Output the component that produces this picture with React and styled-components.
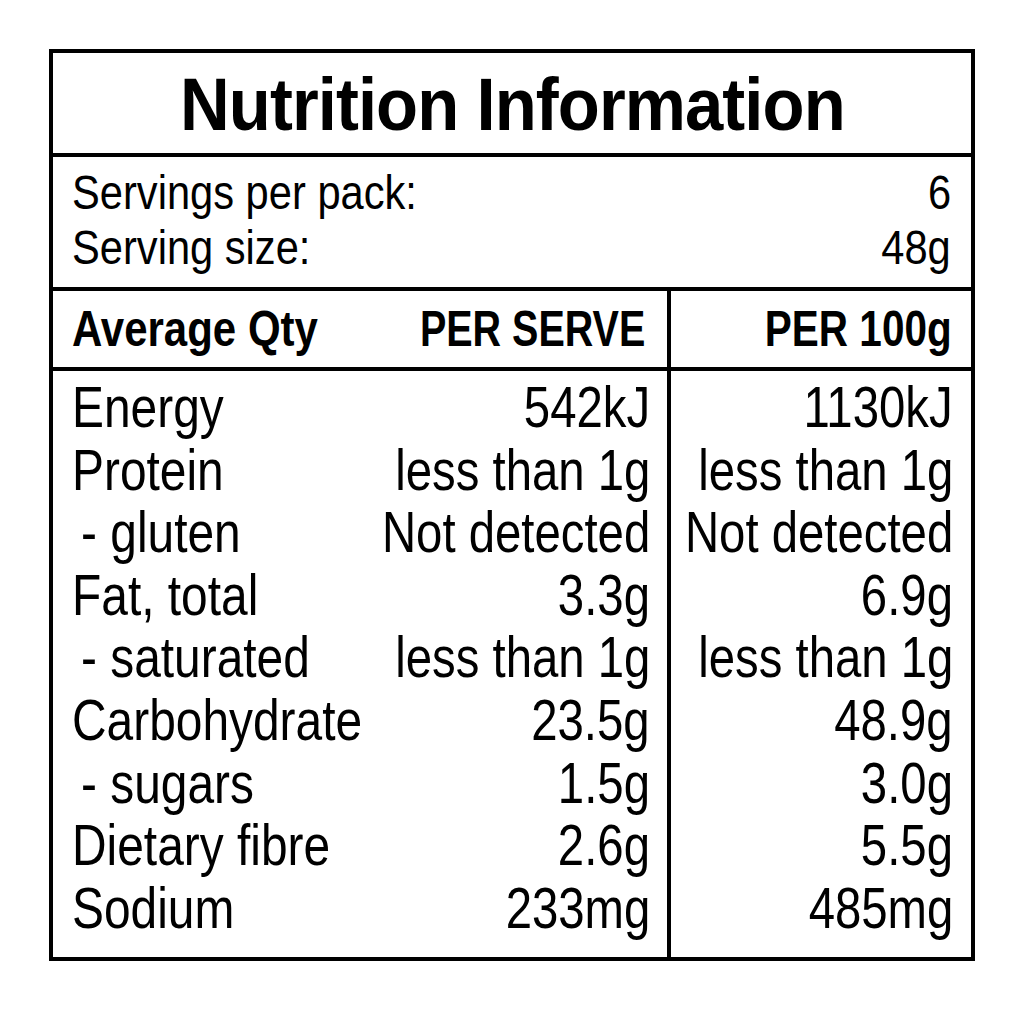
import React from "react";
import styled, { createGlobalStyle } from "styled-components";

const Global = createGlobalStyle`
  html, body { margin: 0; padding: 0; background: #fff; }
  body { font-family: "Liberation Sans", Arial, Helvetica, sans-serif; color: #000; }
`;

const Page = styled.div`
  width: 1024px;
  height: 1024px;
  padding: 49px 0 0 49px;
  box-sizing: border-box;
`;

const Panel = styled.div`
  width: 926px;
  height: 912px;
  box-sizing: border-box;
  border: 4px solid #000;
  display: flex;
  flex-direction: column;
`;

const Narrow = styled.span`
  display: inline-block;
  white-space: nowrap;
  transform: scaleX(${(p) => p.$s || 0.84});
  transform-origin: ${(p) => p.$origin || "left"} center;
`;

const TitleBar = styled.h1`
  margin: 0;
  height: 104px;
  box-sizing: border-box;
  border-bottom: 4px solid #000;
  padding-top: 3px;
  text-align: center;
  font-weight: 700;
  font-size: 74px;
  line-height: 97px;
  letter-spacing: -1px;
  overflow: hidden;
`;

const Servings = styled.div`
  height: 134px;
  box-sizing: border-box;
  border-bottom: 4px solid #000;
  padding: 8px 20px 0 19px;
  font-size: 49px;
  line-height: 55px;
`;

const Line = styled.div`
  display: flex;
  justify-content: space-between;
`;

const Grid = styled.div`
  flex: 1;
  display: grid;
  grid-template-columns: 614px 4px minmax(0, 1fr);
  grid-template-rows: 80px 1fr;
`;

const Divider = styled.div`
  background: #000;
  grid-column: 2;
  grid-row: 1 / 3;
`;

const HeadCell = styled.div`
  border-bottom: 4px solid #000;
  display: flex;
  justify-content: space-between;
  padding: 0 ${(p) => p.$pr}px 0 19px;
  font-weight: 700;
  font-size: 50px;
  line-height: 76px;
  grid-column: ${(p) => p.$col};
  min-width: 0;
`;

const Body = styled.div`
  padding: 5px ${(p) => p.$pr}px 0 19px;
  font-size: 57px;
  line-height: 62.6px;
  grid-column: ${(p) => p.$col};
  min-width: 0;
`;

const Row = styled.div`
  display: flex;
  justify-content: flex-end;
`;

const Label = styled.div`
  flex: 1 1 0;
  min-width: 0;
  padding-left: ${(p) => (p.$sub ? "9px" : "0")};
`;

const Value = styled.div`
  flex: none;
`;

const rows = [
  ["Energy", "542kJ", "1130kJ"],
  ["Protein", "less than 1g", "less than 1g"],
  ["- gluten", "Not detected", "Not detected", true],
  ["Fat, total", "3.3g", "6.9g"],
  ["- saturated", "less than 1g", "less than 1g", true],
  ["Carbohydrate", "23.5g", "48.9g"],
  ["- sugars", "1.5g", "3.0g", true],
  ["Dietary fibre", "2.6g", "5.5g"],
  ["Sodium", "233mg", "485mg"],
];

export default function App() {
  return (
    <Page>
      <Global />
      <Panel>
        <TitleBar>
          <Narrow $s={0.93} $origin="center">
            Nutrition Information
          </Narrow>
        </TitleBar>
        <Servings>
          <Line>
            <Narrow $s={0.85}>Servings per pack:</Narrow>
            <Narrow $s={0.85} $origin="right">6</Narrow>
          </Line>
          <Line>
            <Narrow $s={0.85}>Serving size:</Narrow>
            <Narrow $s={0.85} $origin="right">48g</Narrow>
          </Line>
        </Servings>
        <Grid>
          <HeadCell $col={1} $pr={22}>
            <Label>
              <Narrow $s={0.84}>Average Qty</Narrow>
            </Label>
            <Value>
              <Narrow $s={0.79} $origin="right">
                PER SERVE
              </Narrow>
            </Value>
          </HeadCell>
          <Divider />
          <HeadCell $col={3} $pr={19}>
            <Label />
            <Value>
              <Narrow $s={0.81} $origin="right">
                PER 100g
              </Narrow>
            </Value>
          </HeadCell>
          <Body $col={1} $pr={17}>
            {rows.map(([l, a, , sub]) => (
              <Row key={l}>
                <Label $sub={sub}>
                  <Narrow>{l}</Narrow>
                </Label>
                <Value>
                  <Narrow $s={0.83} $origin="right">{a}</Narrow>
                </Value>
              </Row>
            ))}
          </Body>
          <Body $col={3} $pr={18}>
            {rows.map(([l, , b]) => (
              <Row key={l}>
                <Value>
                  <Narrow $s={0.83} $origin="right">{b}</Narrow>
                </Value>
              </Row>
            ))}
          </Body>
        </Grid>
      </Panel>
    </Page>
  );
}
